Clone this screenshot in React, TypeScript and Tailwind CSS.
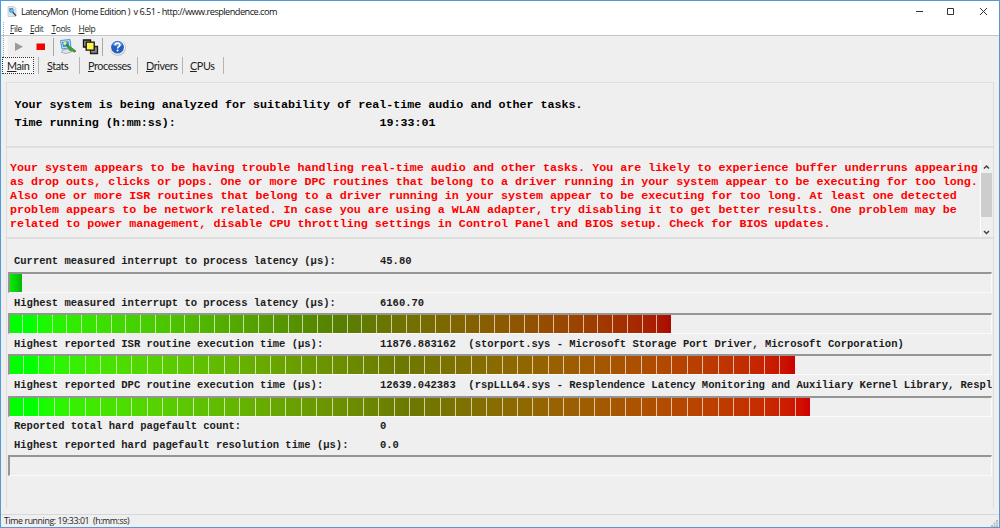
import React from "react";

interface MeterRow {
  label: string;
  value: string;
  rowClass: string;
  barClass: string;
  firstClass: string;
  segments: number;
}

const meters: MeterRow[] = [
  {
    label: "Current measured interrupt to process latency (µs):",
    value: "45.80",
    rowClass: "h-[22px]",
    barClass: "w-[12px] bg-linear-to-r from-[#00ee00] to-[#0ab40a]",
    firstClass: "w-[12px]",
    segments: 1
  },
  {
    label: "Highest measured interrupt to process latency (µs):",
    value: "6160.70",
    rowClass: "h-[20px]",
    barClass: "w-[661px] bg-linear-to-r from-[#00ff00] from-3% via-[#567f00] to-[#ac0800]",
    firstClass: "w-[13px]",
    segments: 45
  },
  {
    label: "Highest reported ISR routine execution time (µs):",
    value: "11876.883162  (storport.sys - Microsoft Storage Port Driver, Microsoft Corporation)",
    rowClass: "h-[20px]",
    barClass: "w-[785px] bg-linear-to-r from-[#00ff00] from-3% via-[#6c7800] to-[#cc0000]",
    firstClass: "w-[14px]",
    segments: 51
  },
  {
    label: "Highest reported DPC routine execution time (µs):",
    value: "12639.042383  (rspLLL64.sys - Resplendence Latency Monitoring and Auxiliary Kernel Library, Respl",
    rowClass: "h-[21px]",
    barClass: "w-[800px] bg-linear-to-r from-[#00ff00] from-3% via-[#6c7800] to-[#d00000]",
    firstClass: "w-[14px]",
    segments: 52
  }
];

const menus = ["File", "Edit", "Tools", "Help"];

const tabs = [
  { name: "Main", itemClass: "w-[32px]", sepClass: "ml-[4px]" },
  { name: "Stats", itemClass: "w-[40px] pl-[8px]", sepClass: "" },
  { name: "Processes", itemClass: "w-[57px] pl-[8px]", sepClass: "" },
  { name: "Drivers", itemClass: "w-[44px] pl-[8px]", sepClass: "" },
  { name: "CPUs", itemClass: "w-[40px] pl-[7px]", sepClass: "" }
];

// First letter underlined as the keyboard accelerator
function Accel({ text }: { text: string }) {
  return (
    <span>
      <span className="underline underline-offset-1 decoration-1">{text[0]}</span>
      {text.slice(1)}
    </span>
  );
}

function Bar({ barClass, firstClass, segments }: { barClass: string; firstClass: string; segments: number }) {
  return (
    <div className="ml-px h-[21px] w-[984px] shrink-0 border-t-2 border-l-2 border-r border-b border-t-[#959595] border-l-[#959595] border-r-[#fbfbfb] border-b-[#fbfbfb]">
      {segments > 0 && (
        <div className={`flex h-full ${barClass}`}>
          {Array.from({ length: segments }).map((_, i) => (
            <div
              key={i}
              className={`${i === 0 ? `shrink-0 ${firstClass}` : "flex-1"} ${i < segments - 1 ? "border-r border-white/65" : ""}`}
            />
          ))}
        </div>
      )}
    </div>
  );
}

function Row({ label, value, rowClass }: { label: string; value: string; rowClass: string }) {
  return (
    <div className={`flex shrink-0 items-center pl-[7px] text-[10.52px] font-bold whitespace-pre text-[#1c1c1c] ${rowClass}`}>
      <span className="w-[366px] shrink-0">{label}</span>
      <span>{value}</span>
    </div>
  );
}

function TitleBar() {
  return (
    <div className="flex h-[21px] shrink-0 items-center bg-white">
      <svg className="ml-[6px] h-[11px] w-[10px]" viewBox="0 0 10 11">
        <path d="M1 .5h6l2 2v8H1z" fill="#dbe8f3" stroke="#aebfce" strokeWidth=".6" />
        <path d="M2 2h4v3H2z" fill="#55a9dc" />
        <circle cx="4.5" cy="4.6" r="2" fill="#6db9e2" stroke="#397ba6" strokeWidth=".7" />
        <path d="M5.8 6.2 9 9.8" stroke="#36434d" strokeWidth="1.3" />
      </svg>
      <span className="ml-[4px] text-[9.2px] tracking-[-0.53px] whitespace-pre text-[#111]">
        LatencyMon  (Home Edition )  v 6.51 - http://www.resplendence.com
      </span>
      <svg className="mr-[10px] ml-auto h-[9px] w-[74px]" viewBox="0 0 74 9" fill="none" stroke="#333">
        <path d="M1 4.5h7" />
        <path d="M32.5 1.5h6v6h-6z" />
        <path d="m65 1 7 7m0-7-7 7" />
      </svg>
    </div>
  );
}

function MenuBar() {
  return (
    <div className="flex h-[14px] shrink-0 items-center border-b border-[#c5c5c5] bg-white pl-[2px]">
      <div className="h-full w-[2px] border-l border-dotted border-[#a8a8a8]" />
      <div className="ml-[5px] flex gap-[8px] pt-px text-[8.5px] tracking-[-0.4px] text-[#222]">
        {menus.map(m => (
          <Accel key={m} text={m} />
        ))}
      </div>
    </div>
  );
}

function ToolBar() {
  return (
    <div className="flex h-[21px] shrink-0 pl-[2px]">
      <div className="h-full w-[5px] border-l border-dotted border-[#a8a8a8] bg-[#f8f8f8]" />
      <svg className="h-[21px] w-[130px]" viewBox="8 36 130 21">
        <path d="M15 42.5v8.5l8-4.2z" fill="#9b9b9b" />
        <path d="M36.5 43.5h8.5v6.5h-8.5z" fill="#f80000" />
        <path d="M53.5 38v18M102.5 38v18" stroke="#a7a7a7" />
        {/* Monitor with pen */}
        <path d="M60.5 40.5 70 39.5l1 8-9 1.5z" fill="#bfe4fa" stroke="#4d94c8" strokeWidth="1" />
        <path d="m62 42 6.5-.8.6 5L63 47z" fill="#238fdb" />
        <circle cx="65" cy="43.5" r="1.8" fill="#f2eb72" />
        <path d="m62 50.5 5-1.5 5 2.500-6 2-4.500-1z" fill="#e2e6e8" stroke="#8fa1ac" strokeWidth=".8" />
        <path d="m66 44 4.5 3 5.5 4-1.5 1.200-5.500-2.700z" fill="#43a439" stroke="#236e20" strokeWidth=".6" />
        {/* Stacked windows */}
        <path d="M83.5 40h7v7h-7z" fill="#999" stroke="#111" strokeWidth="1.3" />
        <path d="M90.5 46.500h7v7h-7z" fill="#888" stroke="#222" strokeWidth="1.3" />
        <path d="M86.2 42.200h8v8h-8z" fill="#fff44a" stroke="#111" strokeWidth="1.3" />
        {/* Help */}
        <circle cx="117.9" cy="47.8" r="8" fill="#b9bcc1" />
        <circle cx="117.5" cy="47.200" r="7.600" fill="#f8f9fb" />
        <circle cx="117.5" cy="47.200" r="6.400" fill="#245ec0" />
        <path d="M112.300 45a5.500 5.500 0 0 1 10.400 0q-5 2.500-10.400 0" fill="#5d92df" />
        <path d="M115.200 45.300c0-3 4.700-2.800 4.700-.3 0 1.700-2.300 1.600-2.300 3.400" fill="none" stroke="#fff" strokeWidth="1.6" />
        <circle cx="117.6" cy="50.6" r="1" fill="#fff" />
      </svg>
    </div>
  );
}

function TabBar() {
  return (
    <div className="flex h-[20px] shrink-0 items-start pl-[1px] font-['Lato',sans-serif] text-[10.8px] tracking-[-0.4px] text-[#222]">
      {tabs.map((t, i) => (
        <div key={t.name} className="flex items-center">
          <div
            className={`flex h-[17px] items-center pt-[2px] ${t.itemClass} ${
              i === 0 ? "border border-dotted border-[#333] bg-[#f7f7f7] pl-[4px]" : ""
            }`}
          >
            <Accel text={t.name} />
          </div>
          <div className={`h-[17px] w-px bg-[#b4b4b4] ${t.sepClass}`} />
        </div>
      ))}
    </div>
  );
}

export default function App() {
  return (
    <div className="flex h-[528px] w-[1000px] flex-col overflow-hidden border border-[#4f9bd9] bg-[#efefef] font-['Open_Sans','Noto_Sans',sans-serif] leading-none">
      <TitleBar />
      <MenuBar />
      <ToolBar />
      <TabBar />

      <div className="mt-[5px] ml-[5px] flex w-[988px] flex-col font-['Liberation_Mono',monospace]">
        {/* Status */}
        <div className="h-[65px] border border-[#dedede] pt-[13px] pl-[7.5px] text-[11.69px] font-bold text-black">
          <div className="h-[18px] leading-[18px]">
            Your system is being analyzed for suitability of real-time audio and other tasks.
          </div>
          <div className="flex h-[18px] leading-[18px]">
            <span className="w-[365px]">Time running (h:mm:ss):</span>
            <span>19:33:01</span>
          </div>
        </div>

        {/* Conclusion text with its scroll bar */}
        <div className="flex h-[91px] justify-between border border-[#dedede] pl-[3px]">
          <div className="pt-[13px] text-[11.69px] leading-[14px] font-bold whitespace-pre text-[#ff0000]">
            <div>Your system appears to be having trouble handling real-time audio and other tasks. You are likely to experience buffer underruns appearing</div>
            <div>as drop outs, clicks or pops. One or more DPC routines that belong to a driver running in your system appear to be executing for too long.</div>
            <div>Also one or more ISR routines that belong to a driver running in your system appear to be executing for too long. At least one detected</div>
            <div>problem appears to be network related. In case you are using a WLAN adapter, try disabling it to get better results. One problem may be</div>
            <div>related to power management, disable CPU throttling settings in Control Panel and BIOS setup. Check for BIOS updates.</div>
          </div>
          <div className="mt-[12px] mr-px flex w-[12px] shrink-0 flex-col items-center border-l border-white">
            <svg className="h-[13px] w-[11px]" viewBox="0 0 11 13" fill="none" stroke="#444" strokeWidth="1.5">
              <path d="m3 8.5 2.5-2.5L8 8.5" />
            </svg>
            <div className="h-[44px] w-[11px] bg-[#cdcdcd]" />
            <svg className="mt-auto h-[12px] w-[11px]" viewBox="0 0 11 12" fill="none" stroke="#444" strokeWidth="1.5">
              <path d="M3 6 5.5 8.5 8 6" />
            </svg>
          </div>
        </div>

        {/* Meters */}
        <div className="flex h-[270px] flex-col border-x border-t border-[#dedede] pt-[11px]">
          {meters.map(m => (
            <React.Fragment key={m.label}>
              <Row label={m.label} value={m.value} rowClass={m.rowClass} />
              <Bar barClass={m.barClass} firstClass={m.firstClass} segments={m.segments} />
            </React.Fragment>
          ))}
          <Row label="Reported total hard pagefault count:" value="0" rowClass="h-[18px]" />
          <Row label="Highest reported hard pagefault resolution time (µs):" value="0.0" rowClass="h-[20px]" />
          <Bar barClass="" firstClass="" segments={0} />
        </div>
      </div>

      <div className="mt-auto flex h-[13px] shrink-0 items-center justify-between border-t border-[#d8d8d8] pl-[3px] text-[8.8px] tracking-[-0.4px] whitespace-pre text-[#222]">
        <span>Time running: 19:33:01  (h:mm:ss)</span>
        <svg className="mr-px h-[7px] w-[7px] self-end" viewBox="0 0 7 7" fill="#bdbdbd">
          <path d="M5 0h2v2H5zM5 2.500h2v2H5zM2.500 2.500h2v2h-2zM0 5h2v2H0zM2.500 5h2v2h-2zM5 5h2v2H5z" />
        </svg>
      </div>
    </div>
  );
}
